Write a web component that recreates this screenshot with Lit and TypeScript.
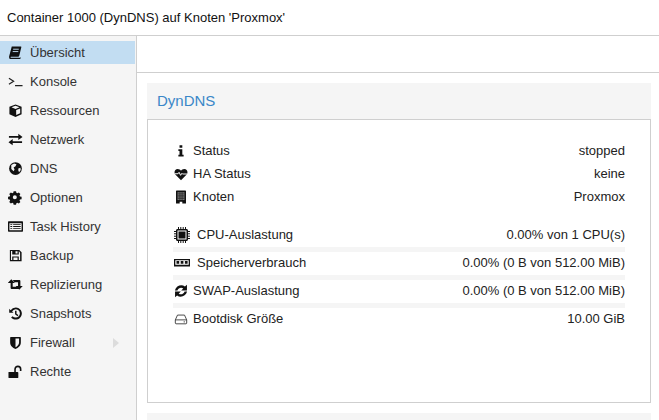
import { LitElement, html, css, svg } from "lit";
import { customElement } from "lit/decorators.js";

const I: Record<string, any> = {
  book: svg`<path d="M4 1.500h9.500c.6 0 .9.500.7 1L12 11.500c-.2.600-.6 1-1.300 1H3.500c-.7 0-.9.500-.7.800.2.300.6.400 1 .4h8.600c.4 0 .6-.3.800-.7l.4.200-.2.800c-.2.700-.6 1-1.300 1H3c-1 0-1.700-.7-1.800-1.800-.1-.6 0-1 .1-1.400Z"/><path d="M5.500 4.500h6M5 7h6" stroke="#c2ddf2" stroke-width="1" fill="none"/>`,
  term: svg`<path d="M1 4.500l5 3.200-5 3.200M7.500 12.500h8" stroke="#222" stroke-width="1.300" fill="none"/>`,
  cube: svg`<path d="M8 1.500 14.500 4v8L8 14.800 1.500 12V4Z"/><path d="M8 3 12.300 4.600 8 6.300 3.700 4.600Z" fill="#f5f5f5"/><path d="M8.700 7.500v5.400L13 11V5.800Z" fill="#f5f5f5"/>`,
  net: svg`<path d="M1 4.200h10V1.800l4.500 3.400-4.500 3.400V6.200H1ZM15 9.800H5V7.400L.5 10.800 5 14.200V11.800h10Z"/>`,
  globe: svg`<circle cx="8" cy="8" r="6.800"/><path d="M3.500 4.200 6.500 2.700 9 3.500 8 5.500 6 7 7 9 6 11 3.500 8.500ZM11 8l2.300-.8.300 2.500-1.800 2.300-.8-2Z" fill="#f5f5f5"/>`,
  gear: svg`<path fill-rule="evenodd" d="M6.500 1h3l.4 2 1.300.6 1.700-1.100 2 2.100-1.100 1.700.6 1.300 2 .4v3l-2 .4-.6 1.300 1.100 1.700-2 2-1.700-1-1.300.5-.4 2h-3l-.4-2-1.300-.5-1.700 1-2-2 1.100-1.700-.6-1.300-2-.4v-3l2-.4.6-1.300-1.100-1.700 2-2.100 1.700 1.100 1.300-.6ZM8 6a2.500 2.500 0 1 0 0 5 2.500 2.500 0 0 0 0-5Z" transform="translate(.4 .4) scale(.86)"/>`,
  list: svg`<path fill-rule="evenodd" d="M1.500 2.500h13.800c.4 0 .7.300.7.700v9.600c0 .4-.3.700-.7.700H.7c-.4 0-.7-.3-.7-.7V3.200c0-.4.300-.7.700-.7ZM1.500 4.500v7.500h13V4.500Z"/><path d="M2.500 5.500h2v1h-2ZM5.500 5.500h8v1h-8ZM2.500 7.500h2v1h-2ZM5.500 7.500h8v1h-8ZM2.500 9.500h2v1h-2ZM5.500 9.500h8v1h-8Z"/>`,
  save: svg`<path fill-rule="evenodd" d="M2 2h10l2.500 2.500V14h-12.500ZM3.200 3.200v9.600h1.300V9h7v3.800h1.400V5L11.500 3.200V7h-7V3.200ZM5.800 10.200v2.600h4.400v-2.600ZM8 3.500v2.300h2.200V3.500Z"/>`,
  retweet: svg`<path d="M3.500 2.500 7.300 6.500H5V10.500H10l1.800 2.200H3.800c-.6 0-1-.4-1-1V6.500H-.3ZM5 3.300h7.200c.6 0 1 .4 1 1V9.500h2.500l-3.700 4-3.700-4h2.400V5.500H6.900Z"/>`,
  hist: svg`<path d="M8.300 1.500a6.500 6.500 0 1 1-5 10.700l1.600-1.400a4.400 4.400 0 1 0-.5-5l1.500 1.500H1.300V3l1.500 1.500a6.500 6.500 0 0 1 5.500-3ZM7.500 5h1.600v3.200l2 1.500-.9 1.100-2.700-2Z"/>`,
  shield: svg`<path fill-rule="evenodd" d="M3 2h10c.4 0 .7.300.7.700V8c0 3.500-2.700 5.600-5.700 7C5 13.600 2.300 11.500 2.300 8V2.700c0-.4.300-.7.700-.7ZM8 3.800V13c2-1 3.800-2.600 3.800-5V3.800Z"/>`,
  unlock: svg`<path d="M.5 8.500h9.700c.4 0 .8.300.8.800v5c0 .4-.4.700-.8.700H1.300c-.5 0-.8-.3-.8-.7Z"/><path d="M7.500 8.500V5.500a3 3 0 0 1 6 0V7.500" fill="none" stroke="#111" stroke-width="1.700"/>`,
  info: svg`<path d="M6.300 1.500h3.200v2.800h-3.200ZM5 6h4.500v6.200h1.500v2H5v-2h1.300V8H5Z"/>`,
  heart: svg`<path d="M8 15 1.500 8.500C-.5 6 1 2.200 4.200 2.200 6 2.200 7.200 3.200 8 4.200 8.800 3.200 10 2.200 11.800 2.200 15 2.200 16.500 6 14.500 8.500Z"/><path d="M1 7.700h3.700l1.100-1.700 1.700 3.500 1.500-2.300.7.800H15" fill="none" stroke="#fff" stroke-width="1.100"/>`,
  building: svg`<path d="M3 .5h10c.4 0 .7.300.7.700V15.500H9.500v-2.200h-3v2.200H2.300V1.200C2.300.8 2.600.5 3 .5Z"/><path d="M4 2.500h8v9H4Z" fill="#777"/><path d="M4 4.300h8M4 6.100h8M4 7.900h8M4 9.700h8M6.700 2.500v9M9.300 2.500v9" stroke="#222" stroke-width=".7"/>`,
  cpu: svg`<path fill-rule="evenodd" d="M3.500 2h9c.8 0 1.500.7 1.500 1.500v9c0 .8-.7 1.500-1.500 1.500h-9c-.8 0-1.500-.7-1.500-1.500v-9C2 2.700 2.700 2 3.500 2ZM3.500 3.500v9h9v-9Z"/><rect x="4.500" y="4.500" width="7" height="7"/><path d="M4.500 0v2M6.800 0v2M9.200 0v2M11.500 0v2M4.500 14v2M6.800 14v2M9.200 14v2M11.500 14v2M0 4.500h2M0 6.800h2M0 9.200h2M0 11.500h2M14 4.500h2M14 6.800h2M14 9.200h2M14 11.500h2" stroke="#111" stroke-width="1"/>`,
  mem: svg`<path fill-rule="evenodd" d="M0 4h16v7.500H0ZM1.300 5.300v4.400h13.400V5.300Z"/><path d="M2.500 6h2.700v2.800H2.500ZM6.700 6h2.700v2.800H6.700ZM10.900 6h2.700v2.800h-2.700Z"/>`,
  refresh: svg`<path d="M14.800 .8v6.600H8.200L10.600 5C8.300 3.300 4.900 4.300 3.900 7.400H1C2.500 2 8.500-.2 12.500 2.900ZM1.200 15.200V8.600h6.600L5.400 11c2.300 1.700 5.700.7 6.700-2.400H15C13.500 14 7.500 16.200 3.500 13.100Z"/>`,
  hdd: svg`<path d="M1.500 9 4 3.500h8L14.500 9v3.700c0 .4-.3.800-.8.800H2.300c-.4 0-.8-.4-.8-.8ZM1.500 9h13M11 11.300h1.500" fill="none" stroke="#333" stroke-width="1"/>`,
};

const icon = (n: string) =>
  html`<svg class="i" viewBox="0 0 16 16" fill="#111">${I[n]}</svg>`;

const NAV: [string, string][] = [
  ["book", "Übersicht"], ["term", "Konsole"], ["cube", "Ressourcen"], ["net", "Netzwerk"],
  ["globe", "DNS"], ["gear", "Optionen"], ["list", "Task History"], ["save", "Backup"],
  ["retweet", "Replizierung"], ["hist", "Snapshots"], ["shield", "Firewall"], ["unlock", "Rechte"],
];

@customElement("app-root")
export class AppRoot extends LitElement {
  static styles = css`
    :host { display: block; width: 659px; height: 420px; overflow: hidden; background: #fff;
      font: 13px/16px "Liberation Sans", Arial, sans-serif; color: #222; }
    .top { height: 35px; border-bottom: 1px solid #cfcfcf; display: flex; align-items: center;
      padding-left: 7px; color: #111; font-size: 13px; }
    .body { display: flex; height: 384px; }
    nav { width: 136px; flex: none; background: #f5f5f5; border-right: 1px solid #cfcfcf; padding-top: 5px; }
    .item { height: 23px; margin-bottom: 6px; margin-right: 1px; display: flex; align-items: center;
      padding-left: 8px; gap: 7px; color: #333; position: relative; }
    .item.sel { background: #c2ddf2; }
    .i { width: 15px; height: 15px; flex: none; }
    .arrow { position: absolute; left: 113px; top: 7px; width: 0; height: 0;
      border-left: 6px solid #dcdcdc; border-top: 5px solid transparent; border-bottom: 5px solid transparent; }
    main { flex: 1; min-width: 0; }
    .toolbar { height: 36px; border-bottom: 1px solid #cfcfcf; }
    .panel { margin: 10px 8px 0 10px; }
    .ph { height: 36px; background: #f5f5f5; display: flex; align-items: center; padding-left: 10px;
      font-size: 15px; color: #3a87c8; }
    .pb { height: 284px; border: 1px solid #cfcfcf; padding: 19px 25px 0 25px; box-sizing: border-box; }
    .ph2 { height: 8px; background: #f5f5f5; margin: 10px 8px 0 10px; }
    .row { display: flex; justify-content: space-between; align-items: center; height: 23px; color: #222; }
    .lab { display: flex; align-items: center; gap: 5px; padding-left: 1px; }
    .lab .i { width: 14px; height: 14px; }
    .gap { height: 16px; }
    .m { height: 28px; position: relative; display: flex; justify-content: space-between;
      align-items: center; padding-bottom: 6px; box-sizing: border-box; }
    .m .bar { position: absolute; left: 0; right: 0; bottom: 0; height: 5px; background: #f5f5f5; }
    .wide .i { width: 16px; height: 16px; }
    .wide { gap: 7px; padding-left: 1px; }
  `;

  render() {
    return html`
      <div class="top">Container 1000 (DynDNS) auf Knoten 'Proxmox'</div>
      <div class="body">
        <nav>
          ${NAV.map(([ic, t], i) => html`<div class="item ${i === 0 ? "sel" : ""}">
            ${icon(ic)}<span>${t}</span>${t === "Firewall" ? html`<span class="arrow"></span>` : ""}
          </div>`)}
        </nav>
        <main>
          <div class="toolbar"></div>
          <div class="panel">
            <div class="ph">DynDNS</div>
            <div class="pb">
              <div class="row"><span class="lab">${icon("info")}Status</span><span>stopped</span></div>
              <div class="row"><span class="lab">${icon("heart")}HA Status</span><span>keine</span></div>
              <div class="row"><span class="lab">${icon("building")}Knoten</span><span>Proxmox</span></div>
              <div class="gap"></div>
              <div class="m"><span class="lab wide">${icon("cpu")}CPU-Auslastung</span><span>0.00% von 1 CPU(s)</span><span class="bar"></span></div>
              <div class="m"><span class="lab wide">${icon("mem")}Speicherverbrauch</span><span>0.00% (0 B von 512.00 MiB)</span><span class="bar"></span></div>
              <div class="m"><span class="lab">${icon("refresh")}SWAP-Auslastung</span><span>0.00% (0 B von 512.00 MiB)</span><span class="bar"></span></div>
              <div class="m"><span class="lab">${icon("hdd")}Bootdisk Größe</span><span>10.00 GiB</span></div>
            </div>
          </div>
          <div class="ph2"></div>
        </main>
      </div>`;
  }
}
